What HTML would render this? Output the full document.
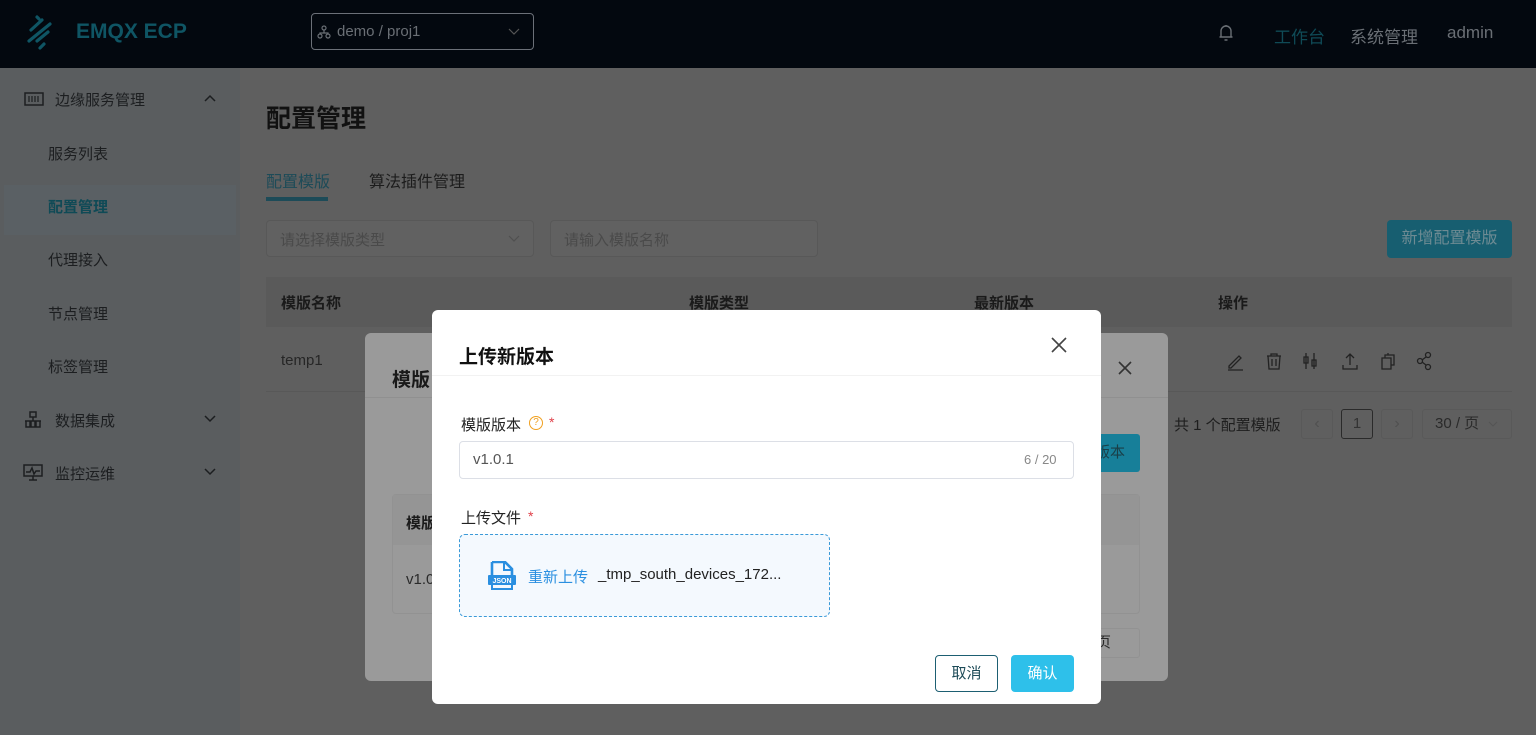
<!DOCTYPE html>
<html><head><meta charset="utf-8"><style>
*{margin:0;padding:0;box-sizing:border-box}
body{width:1536px;height:735px;overflow:hidden;position:relative;background:#5f5f5f;font-family:"Liberation Sans","Noto Sans CJK SC",sans-serif;color:#111}
.abs{position:absolute}
.hdr{left:0;top:0;width:1536px;height:68px;background:#03080f}
.side{left:0;top:68px;width:240px;height:667px;background:#5a5d5f}
.mi{position:absolute;font-size:15px;color:#1c1e20}
.sub{left:48px}
</style></head><body>
<div class="abs hdr">
  <svg class="abs" style="left:26px;top:14px" width="36" height="38" viewBox="0 0 36 38"><g stroke="#0f5564" stroke-width="3.2" stroke-linecap="round"><line x1="11" y1="3" x2="13" y2="5"/><line x1="5" y1="16" x2="16" y2="6"/><line x1="3" y1="27" x2="24" y2="10"/><line x1="11" y1="27" x2="22" y2="18"/><line x1="14" y1="34" x2="18" y2="30"/></g></svg>
  <div class="abs" style="left:76px;top:20px;font-size:21px;font-weight:bold;color:#0f5564">EMQX ECP</div>
  <div class="abs" style="left:311px;top:13px;width:223px;height:37px;border:1px solid #6b7078;border-radius:4px"></div>
  <svg class="abs" style="left:317px;top:25px" width="14" height="14" viewBox="0 0 14 14"><g fill="none" stroke="#6a6f75" stroke-width="1.2"><circle cx="7" cy="3" r="2"/><circle cx="3" cy="11" r="2"/><circle cx="11" cy="11" r="2"/><path d="M7 5v3M3 9V8h8v1"/></g></svg>
  <div class="abs" style="left:337px;top:23px;font-size:15px;color:#6a6f75">demo / proj1</div>
  <svg class="abs" style="left:508px;top:28px" width="12" height="8"><path d="M1 1l5 5 5-5" fill="none" stroke="#555" stroke-width="1.2"/></svg>
  <svg class="abs" style="left:1218px;top:24px" width="16" height="18" viewBox="0 0 16 18"><path d="M3 13V7a5 5 0 0110 0v6M1.5 13h13M6.5 16h3M8 1v1" fill="none" stroke="#6a6f75" stroke-width="1.4"/></svg>
  <div class="abs" style="left:1274px;top:23px;font-size:17px;color:#0f4a56">工作台</div>
  <div class="abs" style="left:1350px;top:23px;font-size:17px;color:#6a6f75">系统管理</div>
  <div class="abs" style="left:1447px;top:23px;font-size:17px;color:#6a6f75">admin</div>
</div>
<div class="abs side">
  <svg class="abs" style="left:24px;top:24px" width="20" height="14"><rect x="1" y="1" width="18" height="12" fill="none" stroke="#1c1e20" stroke-width="1.5"/><path d="M5 4v6M8 4v6M11 4v6M14 4v6" stroke="#1c1e20" stroke-width="1.2"/></svg>
  <div class="mi" style="left:55px;top:21px">边缘服务管理</div>
  <svg class="abs" style="left:204px;top:26px" width="12" height="8"><path d="M1 7l5-5 5 5" fill="none" stroke="#1c1e20" stroke-width="1.5"/></svg>
  <div class="mi sub" style="top:75px">服务列表</div>
  <div class="abs" style="left:4px;top:117px;width:232px;height:50px;background:#5a6064"></div>
  <div class="mi sub" style="top:128px;color:#0f4a56;font-weight:bold">配置管理</div>
  <div class="mi sub" style="top:181px">代理接入</div>
  <div class="mi sub" style="top:235px">节点管理</div>
  <div class="mi sub" style="top:288px">标签管理</div>
  <svg class="abs" style="left:24px;top:342px" width="18" height="18"><path d="M6 2h6v5H6zM1 11h16M2 11v6h4v-6M7 11v6h4v-6M12 11v6h4v-6M9 7v4" fill="none" stroke="#1c1e20" stroke-width="1.5"/></svg>
  <div class="mi" style="left:55px;top:342px">数据集成</div>
  <svg class="abs" style="left:204px;top:347px" width="12" height="8"><path d="M1 1l5 5 5-5" fill="none" stroke="#1c1e20" stroke-width="1.5"/></svg>
  <svg class="abs" style="left:23px;top:395px" width="20" height="18"><path d="M1 2h18v11H1zM6 17h8M10 13v4M3 9h4l2-4 2 6 2-3h4" fill="none" stroke="#1c1e20" stroke-width="1.5"/></svg>
  <div class="mi" style="left:55px;top:395px">监控运维</div>
  <svg class="abs" style="left:204px;top:400px" width="12" height="8"><path d="M1 1l5 5 5-5" fill="none" stroke="#1c1e20" stroke-width="1.5"/></svg>
</div>
<div class="abs" style="left:266px;top:99px;font-size:25px;font-weight:bold;color:#111">配置管理</div>
<div class="abs" style="left:266px;top:168px;font-size:16px;color:#1d4b58">配置模版</div>
<div class="abs" style="left:266px;top:197px;width:62px;height:4px;background:#1d4b58"></div>
<div class="abs" style="left:369px;top:168px;font-size:16px;color:#1c1c1c">算法插件管理</div>
<div class="abs" style="left:266px;top:220px;width:268px;height:37px;border:1px solid #585858;border-radius:4px;background:#616161"></div>
<div class="abs" style="left:280px;top:229px;font-size:15px;color:#4a4a4a">请选择模版类型</div>
<svg class="abs" style="left:508px;top:235px" width="12" height="8"><path d="M1 1l5 5 5-5" fill="none" stroke="#505050" stroke-width="1.2"/></svg>
<div class="abs" style="left:550px;top:220px;width:268px;height:37px;border:1px solid #585858;border-radius:4px;background:#616161"></div>
<div class="abs" style="left:564px;top:229px;font-size:15px;color:#4a4a4a">请输入模版名称</div>
<div class="abs" style="left:1387px;top:220px;width:125px;height:38px;background:#175e70;border-radius:4px;color:#6e8b93;font-size:16px;text-align:center;line-height:38px">新增配置模版</div>
<div class="abs" style="left:266px;top:277px;width:1246px;height:50px;background:#5a5a5a"></div>
<div class="abs" style="left:281px;top:292px;font-size:15px;font-weight:bold;color:#1a1a1a">模版名称</div>
<div class="abs" style="left:689px;top:292px;font-size:15px;font-weight:bold;color:#1a1a1a">模版类型</div>
<div class="abs" style="left:974px;top:292px;font-size:15px;font-weight:bold;color:#1a1a1a">最新版本</div>
<div class="abs" style="left:1218px;top:292px;font-size:15px;font-weight:bold;color:#1a1a1a">操作</div>
<div class="abs" style="left:281px;top:352px;font-size:15px;color:#262626">temp1</div>
<div class="abs" style="left:266px;top:391px;width:1246px;height:1px;background:#585858"></div>
<svg class="abs" style="left:1226px;top:351px" width="210" height="20" viewBox="0 0 210 20"><g fill="none" stroke="#222" stroke-width="1.3">
<path d="M3 15l10-10 2 2-10 10H3zM2 19h15"/>
<path d="M41 5h14M45 5V3h6v2M42 5l1 13h10l1-13M46 8v7M50 8v7"/>
<path d="M80 2v16M88 2v16M78 6h4v6h-4zM86 9h4v6h-4z"/>
<path d="M124 3v11M120 7l4-4 4 4M117 14v4h14v-4"/>
<path d="M156 7h9v11h-9zM159 7V4h9v10h-3M162 4V2h0"/>
<circle cx="202" cy="4" r="2.5"/><circle cx="194" cy="10" r="2.5"/><circle cx="202" cy="16" r="2.5"/><path d="M196 9l4-3M196 11l4 3"/>
</g></svg>
<div class="abs" style="left:1174px;top:414px;font-size:15px;color:#1e1e1e">共 1 个配置模版</div>
<div class="abs" style="left:1301px;top:409px;width:32px;height:30px;border:1px solid #595959;border-radius:3px;color:#505050;text-align:center;line-height:28px">&lsaquo;</div>
<div class="abs" style="left:1341px;top:409px;width:32px;height:30px;border:1px solid #2a2a2a;border-radius:3px;color:#333;text-align:center;line-height:28px;font-size:15px">1</div>
<div class="abs" style="left:1381px;top:409px;width:32px;height:30px;border:1px solid #595959;border-radius:3px;color:#505050;text-align:center;line-height:28px">&rsaquo;</div>
<div class="abs" style="left:1422px;top:409px;width:90px;height:30px;border:1px solid #595959;border-radius:3px;color:#2a2a2a;line-height:28px;padding-left:12px;font-size:15px">30 / 页</div>
<svg class="abs" style="left:1488px;top:421px" width="10" height="7"><path d="M1 1l4 4 4-4" fill="none" stroke="#555" stroke-width="1.1"/></svg>

<!-- back modal -->
<div class="abs" style="left:365px;top:333px;width:803px;height:348px;background:#9a9a9a;border-radius:6px;overflow:hidden">
  <div class="abs" style="left:0;top:64px;width:803px;height:1px;background:#909090"></div>
  <div class="abs" style="left:27px;top:32px;font-size:19px;font-weight:bold;color:#1a1a1a">模版</div>
  <svg class="abs" style="left:753px;top:28px" width="14" height="14"><path d="M1 1l12 12M13 1L1 13" stroke="#333" stroke-width="1.6"/></svg>
  <div class="abs" style="left:700px;top:101px;width:75px;height:38px;background:#177f99;border-radius:3px;color:#1a3f48;font-size:15px;line-height:38px;padding-left:30px">版本</div>
  <div class="abs" style="left:27px;top:161px;width:748px;height:120px;border:1px solid #929292;border-radius:4px"></div>
  <div class="abs" style="left:28px;top:162px;width:746px;height:50px;background:#959595"></div>
  <div class="abs" style="left:41px;top:179px;font-size:15px;font-weight:bold;color:#1a1a1a">模版</div>
  <div class="abs" style="left:41px;top:238px;font-size:15px;color:#2a2a2a">v1.0</div>
  <div class="abs" style="left:700px;top:295px;width:75px;height:30px;border:1px solid #929292;border-radius:3px;color:#2a2a2a;font-size:15px;line-height:28px;padding-left:30px">页</div>
</div>

<!-- front modal -->
<div class="abs" style="left:432px;top:310px;width:669px;height:394px;background:#fff;border-radius:6px">
  <div class="abs" style="left:27px;top:32px;font-size:19px;font-weight:bold;color:#111">上传新版本</div>
  <svg class="abs" style="left:619px;top:27px" width="16" height="16"><path d="M1 1l14 14M15 1L1 15" stroke="#444" stroke-width="1.6"/></svg>
  <div class="abs" style="left:0;top:65px;width:669px;height:1px;background:#f2f2f2"></div>
  <div class="abs" style="left:29px;top:104px;font-size:15px;color:#222">模版版本</div>
  <div class="abs" style="left:97px;top:106px;width:14px;height:14px;border:1.3px solid #f0a020;border-radius:50%;color:#f0a020;font-size:10px;text-align:center;line-height:12px">?</div>
  <div class="abs" style="left:117px;top:104px;font-size:14px;color:#e0404a">*</div>
  <div class="abs" style="left:27px;top:131px;width:615px;height:38px;border:1px solid #dcdfe6;border-radius:4px"></div>
  <div class="abs" style="left:41px;top:141px;font-size:15px;color:#555">v1.0.1</div>
  <div class="abs" style="left:592px;top:142px;font-size:13px;color:#888">6 / 20</div>
  <div class="abs" style="left:29px;top:197px;font-size:15px;color:#222">上传文件</div>
  <div class="abs" style="left:96px;top:198px;font-size:14px;color:#e0404a">*</div>
  <div class="abs" style="left:27px;top:224px;width:371px;height:83px;border:1.3px dashed #3b9ad8;border-radius:6px;background:#f4f9fe"></div>
  <svg class="abs" style="left:55px;top:251px" width="30" height="30" viewBox="0 0 30 30"><path d="M5 1h13l7 7v6M5 1v13" fill="none" stroke="#2a8fe0" stroke-width="2.6"/><path d="M17 1v8h8" fill="none" stroke="#2a8fe0" stroke-width="2"/><rect x="1" y="14" width="28" height="10" rx="1" fill="#2a8fe0"/><text x="15" y="22" font-size="7" fill="#fff" text-anchor="middle" font-family="Liberation Sans" font-weight="bold">JSON</text><path d="M5 24v4h20v-4" fill="none" stroke="#2a8fe0" stroke-width="2"/></svg>
  <div class="abs" style="left:96px;top:256px;font-size:15px;color:#2a8fe0">重新上传</div>
  <div class="abs" style="left:166px;top:256px;font-size:15px;color:#222">_tmp_south_devices_172...</div>
  <div class="abs" style="left:503px;top:345px;width:63px;height:37px;border:1px solid #1d5f72;border-radius:4px;color:#1d4b58;font-size:15px;text-align:center;line-height:35px">取消</div>
  <div class="abs" style="left:579px;top:345px;width:63px;height:37px;background:#2ec0ea;border-radius:4px;color:#fff;font-size:15px;text-align:center;line-height:37px">确认</div>
</div>
</body></html>
